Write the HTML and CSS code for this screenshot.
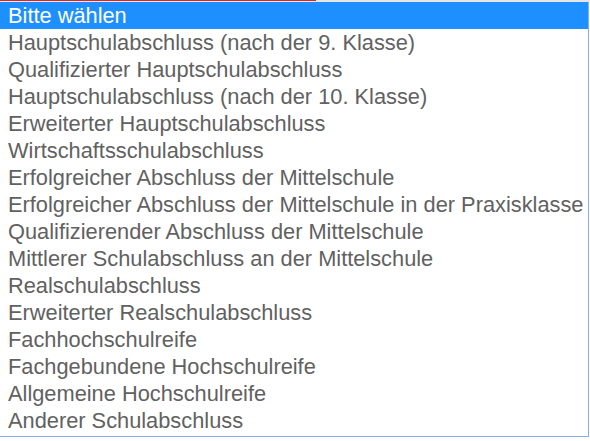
FILE: index.html
```html
<!DOCTYPE html>
<html lang="de">
<head>
<meta charset="utf-8">
<link rel="stylesheet" href="styles.css">
</head>
<body>
<div class="topstrip"><div class="redline"></div></div>
<div class="listbox" role="listbox">
  <div class="opt selected">Bitte wählen</div>
  <div class="opt">Hauptschulabschluss (nach der 9. Klasse)</div>
  <div class="opt">Qualifizierter Hauptschulabschluss</div>
  <div class="opt">Hauptschulabschluss (nach der 10. Klasse)</div>
  <div class="opt">Erweiterter Hauptschulabschluss</div>
  <div class="opt">Wirtschaftsschulabschluss</div>
  <div class="opt">Erfolgreicher Abschluss der Mittelschule</div>
  <div class="opt">Erfolgreicher Abschluss der Mittelschule in der Praxisklasse</div>
  <div class="opt">Qualifizierender Abschluss der Mittelschule</div>
  <div class="opt">Mittlerer Schulabschluss an der Mittelschule</div>
  <div class="opt">Realschulabschluss</div>
  <div class="opt">Erweiterter Realschulabschluss</div>
  <div class="opt">Fachhochschulreife</div>
  <div class="opt">Fachgebundene Hochschulreife</div>
  <div class="opt">Allgemeine Hochschulreife</div>
  <div class="opt">Anderer Schulabschluss</div>
</div>
</body>
</html>
```
FILE: styles.css
```css
html, body {
  margin: 0;
  padding: 0;
  background: #ffffff;
}
body {
  width: 590px;
  height: 441px;
  overflow: hidden;
  font-family: "Liberation Sans", Arial, sans-serif;
}
.topstrip {
  height: 2px;
  background: #e6e6e6;
}
.redline {
  width: 316px;
  height: 1px;
  background: #d42a2a;
}
.listbox {
  width: 589px;
  box-sizing: border-box;
  border-right: 1px solid #8aaee8;
  border-bottom: 1px solid #8aaee8;
  padding-bottom: 2px;
  background: #ffffff;
}
.opt {
  height: 27px;
  line-height: 28px;
  padding-left: 8px;
  font-size: 21.8px;
  color: #616161;
  white-space: nowrap;
  overflow: hidden;
}
.opt.selected {
  background: #1e8fff;
  color: #ffffff;
}
```
